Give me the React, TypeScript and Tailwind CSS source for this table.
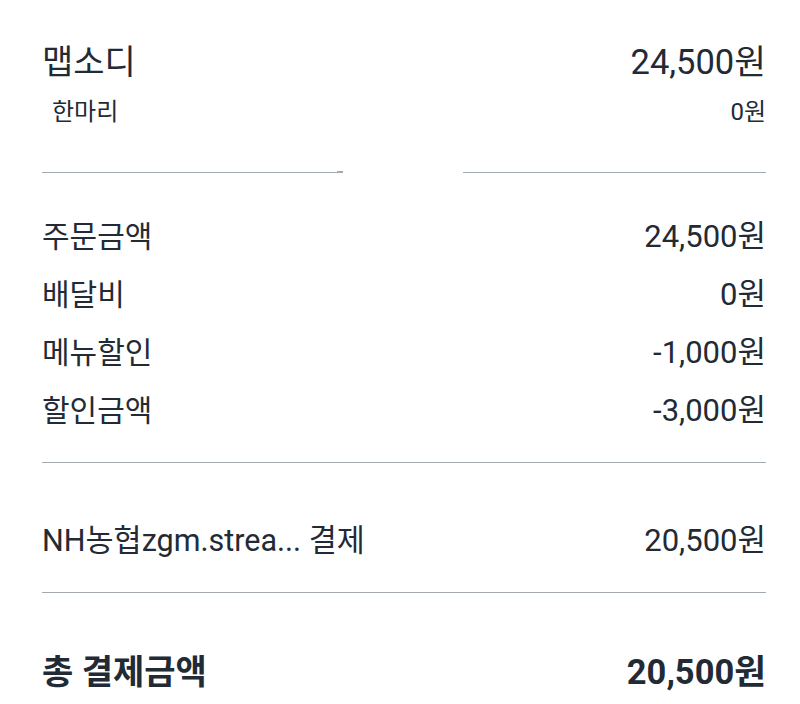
import React from 'react';

const font = "font-['Roboto','Noto_Sans_CJK_KR',sans-serif]";

const rows = [
  { label: '주문금액', value: '24,500원' },
  { label: '배달비', value: '0원' },
  { label: '메뉴할인', value: '-1,000원' },
  { label: '할인금액', value: '-3,000원' },
];

export default function App() {
  return (
    <div className={`w-[800px] h-[704px] bg-white pl-[42px] pr-[34px] pt-[37px] text-[#222b35] ${font}`}>
      {/* Menu item */}
      <div className="flex justify-between h-[50px] leading-[50px]">
        <span className="text-[34px]">맵소디</span>
        <span className="text-[34.5px]">24,500원</span>
      </div>
      <div className="flex justify-between mt-[10px] h-[30px] leading-[30px] text-[24px]">
        <span className="pl-[10px]">한마리</span>
        <span>0원</span>
      </div>

      {/* broken divider */}
      <div className="flex items-start mt-[44px] h-[2px]">
        <div className="w-[295px] h-px mt-px bg-[#a3abb0]" />
        <div className="w-[6px] h-[2px] bg-[#a3abb0]" />
        <div className="w-[120px]" />
        <div className="flex-1 h-px mt-px bg-[#a3abb0]" />
      </div>

      {/* Summary */}
      <div className="mt-[35px]">
        {rows.map((r) => (
          <div key={r.label} className="flex justify-between h-[58px] leading-[58px]">
            <span className="text-[30px]">{r.label}</span>
            <span className="text-[31px]">{r.value}</span>
          </div>
        ))}
      </div>

      <div className="mt-[22px] h-px bg-[#a3abb0]" />

      <div className="flex justify-between mt-[49px] h-[58px] leading-[58px]">
        <span className="text-[30.5px]">NH농협zgm.strea... 결제</span>
        <span className="text-[31px]">20,500원</span>
      </div>

      <div className="mt-[22px] h-px bg-[#a3abb0]" />

      <div className="flex justify-between mt-[50px] h-[58px] leading-[58px] font-bold">
        <span className="text-[34px]">총 결제금액</span>
        <span className="text-[34.5px]">20,500원</span>
      </div>
    </div>
  );
}
